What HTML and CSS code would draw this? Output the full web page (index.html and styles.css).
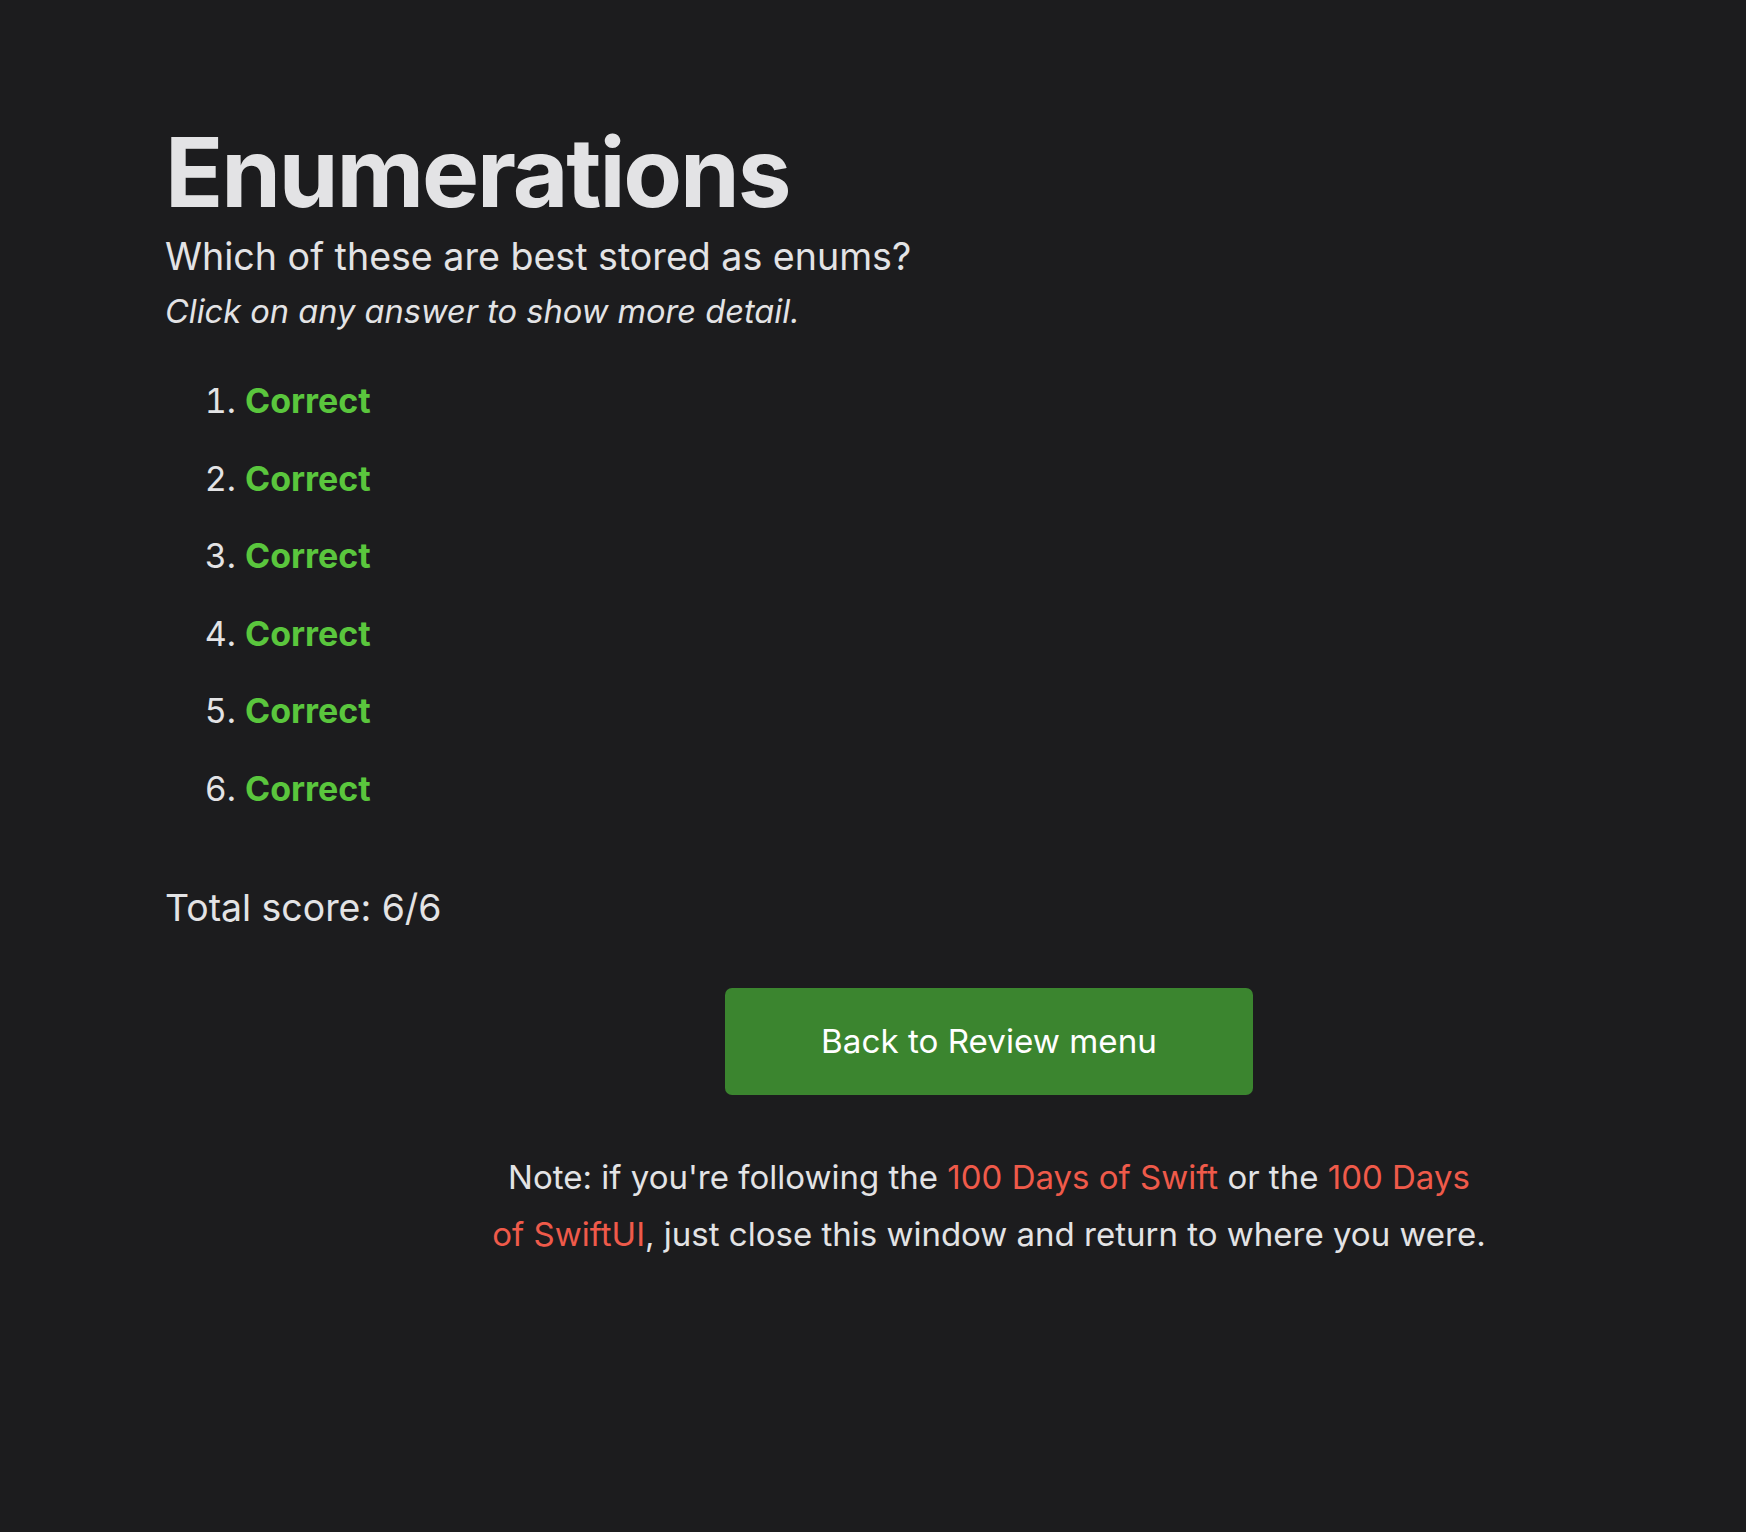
FILE: index.html
```html
<!DOCTYPE html>
<html lang="en">
<head>
<meta charset="utf-8">
<title>Enumerations</title>
<link rel="stylesheet" href="styles.css">
</head>
<body>
<main class="page">
  <h1 class="title">Enumerations</h1>
  <p class="question">Which of these are best stored as enums?</p>
  <p class="hint">Click on any answer to show more detail.</p>
  <ol class="answers">
    <li><span class="correct">Correct</span></li>
    <li><span class="correct">Correct</span></li>
    <li><span class="correct">Correct</span></li>
    <li><span class="correct">Correct</span></li>
    <li><span class="correct">Correct</span></li>
    <li><span class="correct">Correct</span></li>
  </ol>
  <p class="score">Total score: 6/6</p>
  <div class="footer">
    <a class="btn" href="#"><span class="btn-label">Back to Review menu</span></a>
    <p class="note">Note: if you're following the <a href="#">100 Days of Swift</a> or the <a href="#">100 Days of SwiftUI</a>, just close this window and return to where you were.</p>
  </div>
</main>
</body>
</html>
```

FILE: styles.css
```css
html, body {
  margin: 0;
  padding: 0;
  background: #1c1c1e;
}

body {
  font-family: Inter, "Noto Sans", "Liberation Sans", sans-serif;
  color: #e3e3e5;
}

.page {
  padding: 122px 0 200px 165px;
}

.title {
  margin: 0;
  font-size: 96px;
  line-height: 100px;
  font-weight: 700;
  letter-spacing: -0.022em;
  color: #e3e3e5;
}

.question {
  margin: 11px 0 0;
  font-size: 37.6px;
  line-height: 48px;
}

.hint {
  margin: 8px 0 0;
  font-size: 32.6px;
  line-height: 44px;
  font-style: italic;
}

.answers {
  margin: 29px 0 0;
  padding-left: 80px;
  font-size: 34px;
  line-height: 77.6px;
}

.correct {
  color: #5ac63d;
  font-weight: 700;
}

.score {
  margin: 56px 0 0;
  font-size: 37.4px;
  line-height: 48px;
}

.footer {
  margin-left: 67px;
  margin-top: 56px;
  display: flex;
  flex-direction: column;
  align-items: center;
}

.btn {
  display: flex;
  align-items: center;
  justify-content: center;
  width: 528px;
  height: 107px;
  background: #3b852f;
  color: #ffffff;
  font-size: 33.2px;
  line-height: 40px;
  text-decoration: none;
  border-radius: 7px;
}

.note {
  margin: 54px 0 0;
  max-width: 1000px;
  text-align: center;
  font-size: 33px;
  line-height: 57px;
}

.note a {
  color: #ef5a4a;
  text-decoration: none;
}
```
